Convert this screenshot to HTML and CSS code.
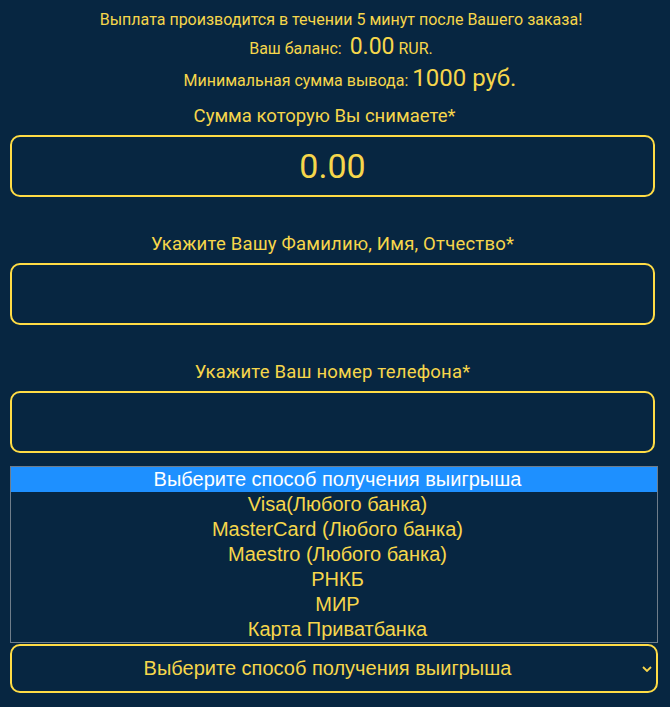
FILE: index.html
```html
<!DOCTYPE html>
<html lang="ru">
<head>
<meta charset="utf-8">
<link rel="stylesheet" href="styles.css">
</head>
<body>
<div class="page">
  <div class="info">
    <p class="line1">Выплата производится в течении 5 минут после Вашего заказа!</p>
    <p class="line2">Ваш баланс:&nbsp; <span class="big1">0.00</span> RUR.</p>
    <p class="line3">Минимальная сумма вывода: <span class="big2">1000 руб.</span></p>
  </div>
  <div class="field first">
    <div class="label label-sum">Сумма которую Вы снимаете*</div>
    <div class="input amount">0.00</div>
  </div>
  <div class="field">
    <div class="label label-wide">Укажите Вашу Фамилию, Имя, Отчество*</div>
    <div class="input"></div>
  </div>
  <div class="field">
    <div class="label label-wide">Укажите Ваш номер телефона*</div>
    <div class="input"></div>
  </div>
  <div class="listbox">
    <div class="opt selected">Выберите способ получения выигрыша</div>
    <div class="opt">Visa(Любого банка)</div>
    <div class="opt">MasterCard (Любого банка)</div>
    <div class="opt">Maestro (Любого банка)</div>
    <div class="opt">РНКБ</div>
    <div class="opt">МИР</div>
    <div class="opt">Карта Приватбанка</div>
  </div>
  <div class="dropdown">
    <span class="dd-text">Выберите способ получения выигрыша</span>
    <svg class="chev" width="10" height="6" viewBox="0 0 10 6"><path d="M1 1 L5 5 L9 1" fill="none" stroke="#f7d54a" stroke-width="1.8"/></svg>
  </div>
</div>
</body>
</html>
```

FILE: styles.css
```css
html, body {
  margin: 0;
  padding: 0;
  background: #072641;
}
body {
  font-family: Roboto, "Noto Sans", sans-serif;
  color: #f6d64b;
}
.page {
  width: 648px;
  padding: 0 0 0 10px;
}
.info {
  text-align: center;
  padding-left: 14px;
}
.info p {
  margin: 0;
}
.line1 {
  font-size: 16px;
  line-height: 20px;
  padding-top: 10px;
}
.line2 {
  font-size: 16px;
  line-height: 28px;
  padding-top: 3px;
}
.big1 {
  font-size: 23px;
}
.line3 {
  font-size: 16px;
  line-height: 30px;
  padding-left: 18px;
}
.big2 {
  font-size: 24px;
}
.field {
  width: 645px;
}
.field.first {
  margin-top: 9px;
}
.field + .field {
  margin-top: 36px;
}
.label {
  text-align: center;
  font-size: 18.5px;
  line-height: 22px;
  margin-bottom: 8px;
}
.label-sum {
  padding-right: 16px;
}
.label-wide {
  letter-spacing: 0.2px;
}
.input {
  box-sizing: border-box;
  height: 62px;
  border: 2px solid #ffdc45;
  border-radius: 10px;
}
.input.amount {
  font-size: 34px;
  line-height: 58px;
  text-align: center;
}
.listbox {
  box-sizing: border-box;
  margin-top: 13px;
  width: 648px;
  border: 1px solid #6f7d8a;
  font-family: "Liberation Sans", Arial, sans-serif;
  font-size: 20px;
  text-align: center;
}
.opt {
  height: 25px;
  line-height: 25px;
  padding-left: 7px;
  color: #f6d64b;
}
.opt.selected {
  background: #1e90ff;
  color: #ffffff;
}
.dropdown {
  box-sizing: border-box;
  margin-top: 1px;
  width: 648px;
  height: 49px;
  padding-right: 13px;
  border: 2px solid #ffdc45;
  border-radius: 10px;
  display: flex;
  align-items: center;
  justify-content: center;
  position: relative;
  font-family: "Liberation Sans", Arial, sans-serif;
  font-size: 20px;
}
.chev {
  position: absolute;
  right: 4px;
  top: 20px;
}
```
